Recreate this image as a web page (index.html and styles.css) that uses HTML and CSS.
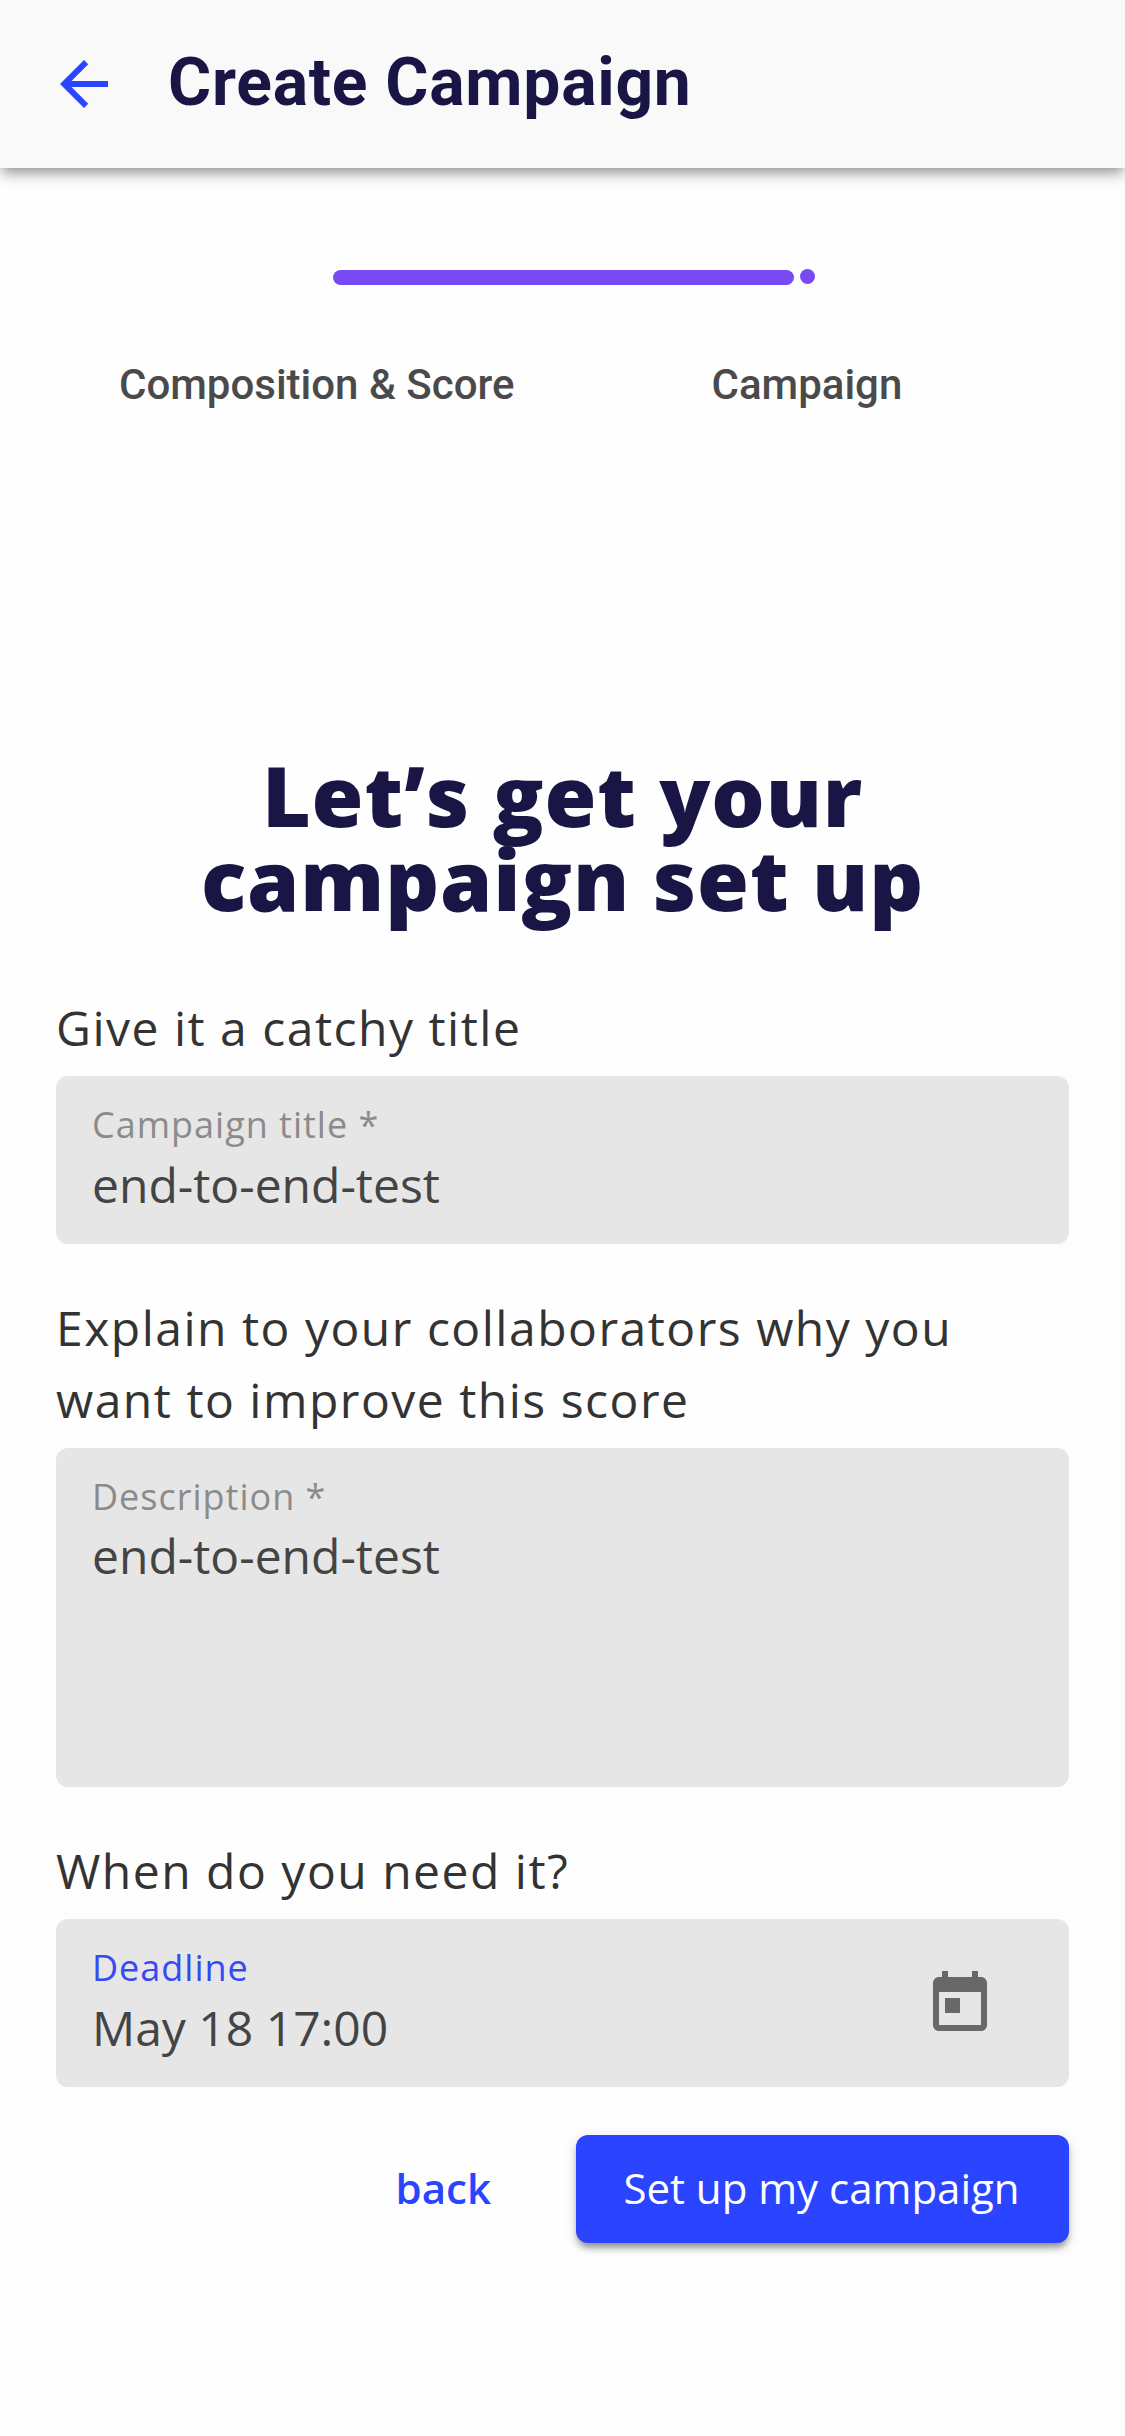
FILE: index.html
```html
<!DOCTYPE html>
<html lang="en">
<head>
<meta charset="utf-8">
<title>Create Campaign</title>
<link rel="stylesheet" href="styles.css">
</head>
<body>
<div class="page">
  <header class="topbar">
    <svg class="icon back-icon" viewBox="0 0 24 24"><path d="M20 11H7.83l5.59-5.59L12 4l-8 8 8 8 1.41-1.41L7.83 13H20v-2z"/></svg>
    <h1 class="topbar-title">Create Campaign</h1>
  </header>
  <div class="progress">
    <div class="progress-bar"></div>
    <div class="progress-dot"></div>
  </div>
  <nav class="steps">
    <span class="step">Composition &amp; Score</span>
    <span class="step">Campaign</span>
  </nav>
  <main class="card">
    <h2 class="heading">Let’s get your<br>campaign set up</h2>
    <form class="form">
      <section class="group">
        <p class="question">Give it a catchy title</p>
        <div class="field">
          <div class="field-text">
            <span class="field-label">Campaign title<span class="required"> *</span></span>
            <span class="field-value">end-to-end-test</span>
          </div>
        </div>
      </section>
      <section class="group">
        <p class="question">Explain to your collaborators why you want to improve this score</p>
        <div class="field field-tall">
          <div class="field-text">
            <span class="field-label">Description<span class="required"> *</span></span>
            <span class="field-value">end-to-end-test</span>
          </div>
        </div>
      </section>
      <section class="group">
        <p class="question">When do you need it?</p>
        <div class="field">
          <div class="field-text">
            <span class="field-label field-label-active">Deadline</span>
            <span class="field-value">May 18 17:00</span>
          </div>
          <svg class="icon calendar-icon" viewBox="0 0 24 24"><path d="M19 3h-1V1h-2v2H8V1H6v2H5c-1.11 0-1.99.9-1.99 2L3 19c0 1.1.89 2 2 2h14c1.1 0 2-.9 2-2V5c0-1.1-.9-2-2-2zm0 16H5V8h14v11zM7 10h5v5H7z"/></svg>
        </div>
      </section>
      <div class="actions">
        <button type="button" class="button button-text">back</button>
        <button type="button" class="button button-primary">Set up my campaign</button>
      </div>
    </form>
  </main>
</div>
</body>
</html>
```
FILE: styles.css
```css
* {
  box-sizing: border-box;
}

body {
  margin: 0;
  background: #fefefe;
  font-family: "Open Sans", sans-serif;
}

.page {
  height: 2436px;
  overflow: hidden;
}

.icon {
  width: 72px;
  height: 72px;
  flex: none;
  fill: currentColor;
}

.topbar {
  display: flex;
  align-items: center;
  height: 168px;
  padding: 0 48px;
  gap: 48px;
  background: #f9f9f9;
  box-shadow: 0 6px 12px -3px rgba(0, 0, 0, .3), 0 6px 15px rgba(0, 0, 0, .2);
}

.back-icon {
  color: #2a44ff;
}

.topbar-title {
  margin: 0;
  padding-bottom: 2px;
  font: 700 66px/78px Roboto, sans-serif;
  letter-spacing: .75px;
  color: #191645;
}

.progress {
  display: flex;
  gap: 6px;
  margin: 101px 0 0 333px;
}

.progress-bar {
  width: 461px;
  height: 15px;
  margin-top: 1px;
  border-radius: 8px;
  background: #774af4;
}

.progress-dot {
  width: 15px;
  height: 15px;
  border-radius: 50%;
  background: #774af4;
}

.steps {
  display: grid;
  grid-template-columns: 592.5px auto;
  height: 60px;
  margin: 70px 0 0 119px;
  font: 500 42px/60px Roboto, sans-serif;
  color: #4a4a4a;
}

.card {
  height: 1370px;
  margin: 117px 75px 0;
  padding-top: 221px;
  border-radius: 12px;
  background: #fefefe;
  box-shadow: 0 0 0 135px #fdfdfd, 0 50px 0 135px #fdfdfd;
}

.heading {
  margin: 0;
  text-align: center;
  font-weight: 800;
  font-size: 84px;
  line-height: 84px;
  letter-spacing: .84px;
  color: #191645;
}

.form {
  display: flex;
  flex-direction: column;
  gap: 48px;
  margin: 71px -19px 0;
}

.question {
  margin: 0 0 12px;
  font-size: 48px;
  line-height: 72px;
  letter-spacing: 1.5px;
  color: #333;
}

.field {
  display: flex;
  align-items: center;
  justify-content: space-between;
  height: 168px;
  padding: 0 73px 0 36px;
  border-radius: 12px;
  background: #e6e6e6;
}

.field-tall {
  height: 339px;
}

.field-text {
  display: flex;
  flex-direction: column;
  align-self: flex-start;
  gap: 4px;
  padding-top: 25px;
}

.field-tall .field-text {
  gap: 3px;
}

.field-label {
  font-size: 36px;
  line-height: 48px;
  letter-spacing: 1px;
  color: #8b8b8b;
}

.field-label-active {
  color: #3549f4;
}

.field-value {
  font-size: 48px;
  line-height: 64px;
  color: #444;
}

.calendar-icon {
  margin-top: 2px;
  color: #686868;
}

.actions {
  display: flex;
  justify-content: flex-end;
  gap: 37px;
}

.button {
  height: 108px;
  padding: 0 48px 3px;
  border: 0;
  border-radius: 12px;
  font-family: inherit;
  font-size: 42px;
}

.button-text {
  background: none;
  font-weight: 600;
  color: #2a44ff;
}

.button-primary {
  width: 493px;
  padding: 0 2px 3px 0;
  background: #2a44ff;
  box-shadow: 0 6px 6px -3px rgba(0, 0, 0, .3), 0 3px 15px rgba(0, 0, 0, .12), 0 6px 6px rgba(0, 0, 0, .14);
  color: #fff;
}
```
